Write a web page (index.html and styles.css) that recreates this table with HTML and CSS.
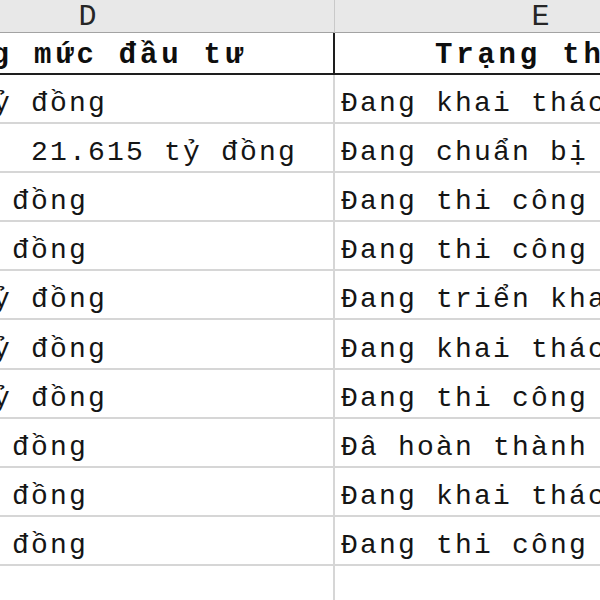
FILE: index.html
```html
<!DOCTYPE html>
<html lang="vi">
<head>
<meta charset="utf-8">
<title>Bảng dự án</title>
<link rel="stylesheet" href="styles.css">
</head>
<body>
<div class="viewport">
  <div class="sheet">
    <div class="cell hd col-d">D</div>
    <div class="cell hd col-e">E</div>

    <div class="cell title col-d">Tổng mức đầu tư</div>
    <div class="cell title col-e">Trạng thái</div>

    <div class="cell data col-d">11.000 tỷ đồng</div>
    <div class="cell data col-e">Đang khai thác</div>

    <div class="cell data col-d">Dự kiến   21.615 tỷ đồng</div>
    <div class="cell data col-e">Đang chuẩn bị đầu tư</div>

    <div class="cell data col-d">5.950 tỷ đồng</div>
    <div class="cell data col-e">Đang thi công</div>

    <div class="cell data col-d">7.200 tỷ đồng</div>
    <div class="cell data col-e">Đang thi công</div>

    <div class="cell data col-d">12.300 tỷ đồng</div>
    <div class="cell data col-e">Đang triển khai</div>

    <div class="cell data col-d">14.800 tỷ đồng</div>
    <div class="cell data col-e">Đang khai thác</div>

    <div class="cell data col-d">16.000 tỷ đồng</div>
    <div class="cell data col-e">Đang thi công</div>

    <div class="cell data col-d">4.500 tỷ đồng</div>
    <div class="cell data col-e">Đâ hoàn thành</div>

    <div class="cell data col-d">3.900 tỷ đồng</div>
    <div class="cell data col-e">Đang khai thác</div>

    <div class="cell data col-d">8.100 tỷ đồng</div>
    <div class="cell data col-e">Đang thi công</div>

    <div class="cell data col-d"></div>
    <div class="cell data col-e"></div>
  </div>
</div>
</body>
</html>
```
FILE: styles.css
```css
html, body {
  margin: 0;
  padding: 0;
  background: #ffffff;
}

.viewport {
  width: 600px;
  height: 600px;
  overflow: hidden;
}

.sheet {
  display: grid;
  grid-template-columns: 494px 412px;
  margin-left: -159px;
  font-family: "Liberation Mono", "DejaVu Sans Mono", monospace;
  color: #151515;
}

.cell {
  box-sizing: border-box;
  white-space: pre;
  overflow: hidden;
  display: flex;
}

.hd {
  height: 33px;
  background: #e8e8e8;
  border-bottom: 1px solid #a3a3a3;
  border-right: 1px solid #c9c9c9;
  font-size: 30px;
  line-height: 30px;
  padding-top: 2px;
  justify-content: center;
  align-items: flex-start;
  color: #262626;
}

.title {
  height: 42px;
  border-bottom: 2px solid #1e1e1e;
  font-size: 29px;
  line-height: 28px;
  font-weight: bold;
  letter-spacing: 3.8px;
  justify-content: center;
  align-items: flex-end;
  padding-bottom: 3px;
  color: #0e0e0e;
}

.title.col-d {
  border-right: 2px solid #1e1e1e;
}

.data {
  height: 49.1px;
  border-bottom: 2px solid #d6d6d6;
  font-size: 28px;
  line-height: 28px;
  letter-spacing: 2.2px;
  align-items: flex-end;
  padding-bottom: 4px;
}

.data.col-d {
  border-right: 2px solid #d6d6d6;
  padding-left: 0;
}

.data.col-e {
  padding-left: 6px;
}
```
